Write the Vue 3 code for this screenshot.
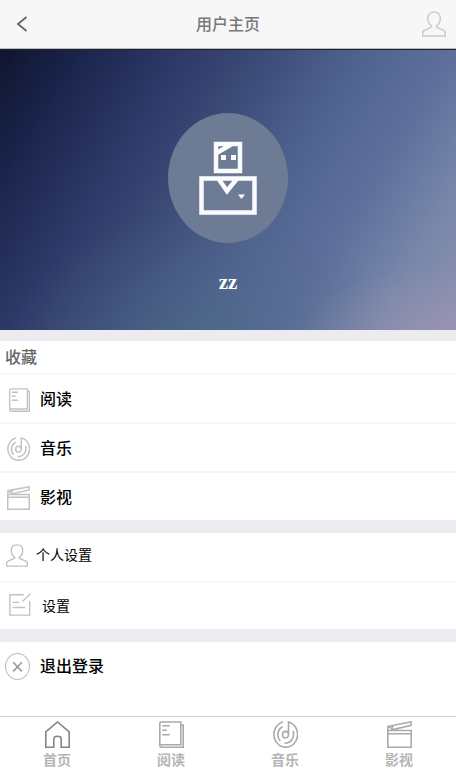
<script setup>
const favorites = [
  { label: '阅读', icon: 'read' },
  { label: '音乐', icon: 'music' },
  { label: '影视', icon: 'film' },
]
const tabs = [
  { label: '首页', icon: 'home' },
  ...favorites,
]
</script>

<template>
  <div class="page">
    <svg class="sprite" aria-hidden="true">
      <symbol id="person" viewBox="0 0 25 27" preserveAspectRatio="none">
        <path d="M9.8 15.5C7.3 13.7 6 11 6 7.6 6 3.6 8.6 1 12.5 1S19 3.6 19 7.6c0 3.4-1.3 6.1-3.8 7.9v1.2l7.9 3.8q1.2.7 1.2 2.3V26H.7v-3.2q0-1.6 1.2-2.3l7.9-3.8z" />
      </symbol>
      <symbol id="home" viewBox="0 0 25 27" preserveAspectRatio="none">
        <path d="M.8 10.8 12.5 1l11.7 9.8v15.4h-8v-8.4q0-2.5-3.7-2.5t-3.7 2.5v8.4h-8z" />
      </symbol>
      <symbol id="read" viewBox="0 0 25 27" preserveAspectRatio="none">
        <path d="M2.3 1h19.5v22.7H2.4Q.8 23.7.8 25V2.3Q.8 1 2.3 1zM.8 24.7q0 1.5 1.6 1.5h21.8V4h-2.3M3.2 4.7h7.6M3.2 9.2h4.6M3.2 13.7h7.6" />
      </symbol>
      <symbol id="music" viewBox="0 0 25 27" preserveAspectRatio="none">
        <path d="M10 1A11.8 12.8 0 1 0 15.5 1V13.5M9.6 5.8A8.6 9 0 0 0 7.2 20M20.2 9.8c1.5 6-1.5 12.4-8.8 12.5M15.5 13.7a3 3.3 0 1 1-6 0 3 3.3 0 0 1 6 0" />
      </symbol>
      <symbol id="film" viewBox="0 0 25 27" preserveAspectRatio="none">
        <path d="M.8 26.2V9.5h23.4v16.7zM.8 12.7h23.4M1 9.2V5.3L24 .9v3.4L5 8.9M1 5.2l4.5 2.7M6 4.5 4.5 8.8" />
      </symbol>
      <symbol id="note" viewBox="0 0 25 27" preserveAspectRatio="none">
        <path d="M17 2H1v24h22.5V9.5M24.3.8l-9 9.1M4 11h7.5M4 17h14.5" />
      </symbol>
      <symbol id="close" viewBox="0 0 25 27" preserveAspectRatio="none">
        <ellipse cx="12.5" cy="13.5" rx="12" ry="13" />
        <path class="cross" d="m8.2 9.2 8.6 9.2M16.8 9.2l-8.6 9.2" />
      </symbol>
    </svg>

    <header class="header">
      <svg class="back" viewBox="0 0 12 16"><path d="M10.5 1 2 8l8.5 7" /></svg>
      <h1>用户主页</h1>
      <svg class="icon account"><use href="#person" /></svg>
    </header>

    <section class="hero">
      <svg class="avatar" viewBox="0 0 120 130">
        <ellipse cx="60" cy="65" rx="60" ry="65" fill="#6d7b94" />
        <g fill="none" stroke="#fafbff" stroke-width="4.5">
          <path d="M48 31h24v27H48zM47 41 64 31M33.5 65.5h53v34h-53zM50 65l9 13 10.5-13" />
        </g>
        <path fill="#fafbff" d="M53 42h5v5h-5zM63 42h5v5h-5zM70 81.5h7l-3.5 4.5z" />
      </svg>
      <strong class="name">zz</strong>
    </section>

    <section class="group favorites">
      <h2>收藏</h2>
      <div v-for="item in favorites" :key="item.icon" class="row">
        <svg class="icon" :class="item.icon"><use :href="`#${item.icon}`" /></svg>
        <span>{{ item.label }}</span>
      </div>
    </section>

    <section class="group settings">
      <div class="row profile">
        <svg class="icon"><use href="#person" /></svg><span>个人设置</span>
      </div>
      <div class="row config">
        <svg class="icon"><use href="#note" /></svg><span>设置</span>
      </div>
    </section>

    <section class="group logout">
      <div class="row">
        <svg class="icon"><use href="#close" /></svg><span>退出登录</span>
      </div>
    </section>

    <nav class="tabs">
      <a v-for="tab in tabs" :key="tab.icon" :class="{ active: tab.icon === 'home' }">
        <svg class="icon"><use :href="`#${tab.icon}`" /></svg>
        <span>{{ tab.label }}</span>
      </a>
    </nav>
  </div>
</template>

<style>
body { margin: 0; overflow: hidden; }
</style>

<style scoped>
* { box-sizing: border-box; }
.page {
  display: flex;
  flex-direction: column;
  height: 770px;
  background: #ebebf0;
  font-family: "Liberation Serif", "Noto Sans CJK SC", sans-serif;
  color: #000;
}
.sprite { position: absolute; width: 0; height: 0; }
.icon {
  display: block;
  flex: none;
  width: 23px;
  height: 24px;
  fill: none;
  stroke: #c2c2c2;
  stroke-width: 1.6;
}
.header {
  display: grid;
  grid-template-columns: 60px 1fr 60px;
  align-items: center;
  height: 49px;
  flex: none;
  background: #f7f7f7;
  border-bottom: 1px solid #b9bbb8;
}
.back { width: 12px; height: 16px; margin-left: 16px; fill: none; stroke: #666; stroke-width: 1.8; }
h1 { margin: 0; padding-top: 1px; text-align: center; font-size: 16px; line-height: 24px; font-weight: 500; color: #777; }
.account { justify-self: end; width: 24px; height: 26px; margin-right: 10px; stroke: #ccc; }
.hero {
  display: flex;
  flex-direction: column;
  align-items: center;
  flex: none;
  height: 281px;
  padding-top: 63px;
  border-top: 1px solid #20232f;
  background:
    radial-gradient(ellipse 160px 80px at 100% 105%, rgba(160, 148, 178, .7), transparent),
    radial-gradient(ellipse 200px 150px at 45% 110%, rgba(74, 104, 132, .6), transparent),
    linear-gradient(122deg, #10152e 0%, #19234a 12%, #2e3968 29%, #3d4c78 43%, #50638f 58%, #5e6f9c 72%, #7988aa 87%, #8e90b0 100%);
}
.avatar { width: 120px; height: 130px; flex: none; }
.name { margin-top: 27px; font-size: 21px; line-height: 24px; color: #fff; }
.group { flex: none; background: #fff; }
.favorites { height: 179px; margin-top: 11px; }
h2 { height: 32px; margin: 0; padding: 1px 0 0 5px; font-size: 16px; line-height: 32px; font-weight: 500; color: #666; }
.row { display: flex; align-items: center; height: 49px; font-size: 16px; font-weight: 500; }
.favorites .row { height: 49px; padding: 3px 0 0 7px; border-top: 2px solid #f6f6f6; }
.favorites .row span { margin: -5px 0 0 10px; }
.favorites .icon.read { width: 21px; margin: 0 0 0 2px; }
.settings { height: 96px; margin-top: 13px; }
.settings .row { height: 48px; padding-left: 6px; font-size: 14px; font-weight: 400; }
.settings .profile { padding-bottom: 4px; }
.settings .profile .icon { width: 22px; height: 23px; }
.settings .profile span { margin: -2px 0 0 8px; }
.settings .config { padding-left: 9px; border-top: 2px solid #f6f6f6; }
.settings .config .icon { width: 22px; height: 23px; margin-top: -3px; }
.settings .config span { margin: -2px 0 0 11px; }
.logout { flex: 1; margin-top: 13px; }
.logout .row { padding-left: 5px; }
.logout .icon { width: 25px; height: 27px; stroke-width: 1.2; }
.logout .row span { margin: -3px 0 0 10px; }
.cross { stroke: #999; stroke-width: 1.6; }
.tabs {
  display: grid;
  grid-template-columns: repeat(4, 1fr);
  flex: none;
  height: 54px;
  padding-top: 4px;
  background: #fff;
  border-top: 1px solid #d0d2d1;
}
.tabs a { display: flex; flex-direction: column; align-items: center; font-size: 14px; font-weight: 700; line-height: 20px; color: #b5b5b5; }
.tabs .icon { width: 25px; height: 27px; stroke: #aaa; }
.tabs .active .icon { stroke: #858585; }
.tabs span { margin-top: 3px; }
</style>
